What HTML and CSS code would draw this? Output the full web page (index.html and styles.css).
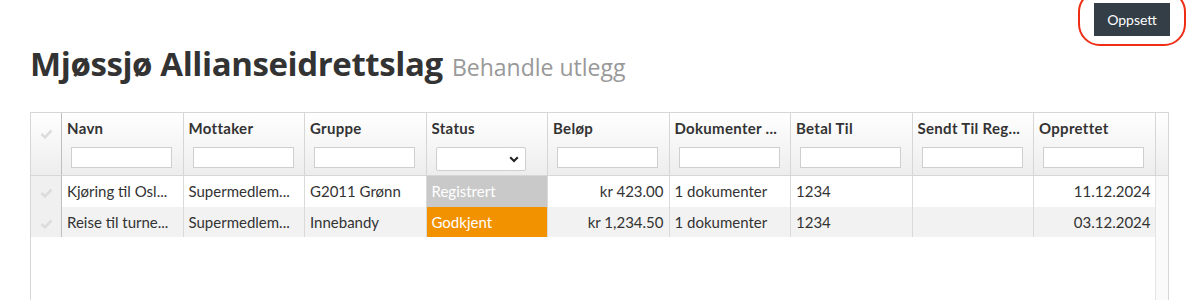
FILE: index.html
```html
<!DOCTYPE html>
<html lang="no">
<head>
<meta charset="utf-8">
<title>Behandle utlegg</title>
<link rel="stylesheet" href="styles.css">
</head>
<body>
<div class="topbar">
  <div class="highlight">
    <button class="btn-dark">Oppsett</button>
  </div>
</div>
<h1 class="title">Mjøssjø Allianseidrettslag <small>Behandle utlegg</small></h1>

<div class="grid">
  <div class="grid-head">
    <div class="hcell chk"><svg class="tick" width="13" height="10" viewBox="0 0 13 10"><path d="M1.5 5 L5 8.3 L11.5 1.5" fill="none" stroke="#dcdcdc" stroke-width="2.6"/></svg></div>
    <div class="hcell"><div class="hlabel">Navn</div><input class="filter" type="text"></div>
    <div class="hcell"><div class="hlabel">Mottaker</div><input class="filter" type="text"></div>
    <div class="hcell"><div class="hlabel">Gruppe</div><input class="filter" type="text"></div>
    <div class="hcell"><div class="hlabel">Status</div>
      <div class="select"><svg width="10" height="7" viewBox="0 0 10 7"><path d="M1.2 1.2 L5 5 L8.8 1.2" fill="none" stroke="#222" stroke-width="2"/></svg></div>
    </div>
    <div class="hcell"><div class="hlabel">Beløp</div><input class="filter" type="text"></div>
    <div class="hcell"><div class="hlabel">Dokumenter ...</div><input class="filter" type="text"></div>
    <div class="hcell"><div class="hlabel">Betal Til</div><input class="filter" type="text"></div>
    <div class="hcell"><div class="hlabel">Sendt Til Reg...</div><input class="filter" type="text"></div>
    <div class="hcell"><div class="hlabel">Opprettet</div><input class="filter" type="text"></div>
    <div class="hcell spacer"></div>
  </div>
  <div class="grid-body">
    <div class="rows">
      <div class="row">
        <div class="cell chk"><svg class="tick" width="13" height="10" viewBox="0 0 13 10"><path d="M1.5 5 L5 8.3 L11.5 1.5" fill="none" stroke="#dcdcdc" stroke-width="2.6"/></svg></div>
        <div class="cell">Kjøring til Osl...</div>
        <div class="cell">Supermedlem...</div>
        <div class="cell">G2011 Grønn</div>
        <div class="cell status reg">Registrert</div>
        <div class="cell num">kr 423.00</div>
        <div class="cell">1 dokumenter</div>
        <div class="cell">1234</div>
        <div class="cell"></div>
        <div class="cell num">11.12.2024</div>
      </div>
      <div class="row alt">
        <div class="cell chk"><svg class="tick" width="13" height="10" viewBox="0 0 13 10"><path d="M1.5 5 L5 8.3 L11.5 1.5" fill="none" stroke="#dcdcdc" stroke-width="2.6"/></svg></div>
        <div class="cell">Reise til turne...</div>
        <div class="cell">Supermedlem...</div>
        <div class="cell">Innebandy</div>
        <div class="cell status ok">Godkjent</div>
        <div class="cell num">kr 1,234.50</div>
        <div class="cell">1 dokumenter</div>
        <div class="cell">1234</div>
        <div class="cell"></div>
        <div class="cell num">03.12.2024</div>
      </div>
    </div>
    <div class="vscroll"></div>
  </div>
</div>
</body>
</html>
```

FILE: styles.css
```css
* { box-sizing: border-box; }
html, body { margin: 0; padding: 0; background: #fff; }
body {
  font-family: "Lato", "Open Sans", sans-serif;
  color: #333;
  padding: 0 20px 0 30px;
  overflow: hidden;
  height: 300px;
}
.topbar {
  display: flex;
  justify-content: flex-end;
  height: 36px;
  margin-top: -10px;
}
.highlight {
  border: 2px solid #ee2d14;
  border-radius: 22px;
  padding: 11px 14px 8px 14px;
  margin-right: -17px;
  height: 56px;
}
.btn-dark {
  background: #343e47;
  color: #fff;
  border: 0;
  font-family: inherit;
  font-size: 14px;
  width: 76px;
  height: 33px;
  padding: 0;
  margin: 0;
  display: block;
}
.title {
  margin: 0;
  font-family: "Open Sans", sans-serif;
  font-size: 33px;
  font-weight: 700;
  color: #333;
  line-height: 40px;
  height: 86px;
  padding-top: 18px;
  letter-spacing: -0.4px;
}
.title small {
  font-size: 23px;
  font-weight: 400;
  color: #999;
  margin-left: 1px;
  letter-spacing: 0;
}
.grid {
  border: 1px solid #d6d6d6;
  width: 1139px;
  height: 200px;
}
.grid-head {
  display: flex;
  height: 63px;
  background: linear-gradient(#fff, #ededed);
  border-bottom: 1px solid #d6d6d6;
}
.hcell {
  width: 121.5px;
  flex: none;
  border-right: 1px solid #d6d6d6;
  padding: 6px 8px 0 5px;
}
.hcell.chk {
  width: 31px;
  border-right: 1px solid #bfbfbf;
  padding: 9px 0 0 0;
  text-align: center;
}
.hcell.spacer {
  flex: 1;
  width: auto;
  border-right: 0;
}
.hlabel {
  font-size: 15px;
  font-weight: 700;
  color: #333;
  line-height: 18px;
  letter-spacing: 0.3px;
  white-space: nowrap;
  overflow: hidden;
}
.filter {
  display: block;
  margin: 10px 0 0 4px;
  width: 101px;
  height: 21px;
  border: 1px solid #cfcfcf;
  background: #fff;
  padding: 0;
}
.select {
  margin: 10px 0 0 4px;
  width: 90px;
  height: 24px;
  border: 1px solid #cfcfcf;
  border-radius: 2px;
  background: #fff;
  display: flex;
  align-items: center;
  justify-content: flex-end;
  padding-right: 6px;
}
.tick { display: inline-block; vertical-align: middle; }
.grid-body {
  display: flex;
  height: 135px;
}
.rows { width: 1124px; flex: none; }
.vscroll {
  flex: 1;
  background: #fafafa;
  border-left: 1px solid #e4e4e4;
}
.row {
  display: flex;
  height: 30.5px;
  background: #fff;
}
.row.alt { background: #f2f2f2; }
.cell {
  width: 121.5px;
  flex: none;
  border-right: 1px solid #dadada;
  padding: 0 5px;
  font-size: 15px;
  line-height: 30px;
  white-space: nowrap;
  overflow: hidden;
  color: #333;
}
.cell:last-child { border-right: 0; }
.cell.chk {
  width: 31px;
  text-align: center;
  background: #f0f0f0;
  border-right: 1px solid #bfbfbf;
  padding: 0;
}
.cell.num { text-align: right; }
.status { color: #fff; }
.status.reg { background: #c9c9c9; }
.status.ok { background: #f39200; }
```
